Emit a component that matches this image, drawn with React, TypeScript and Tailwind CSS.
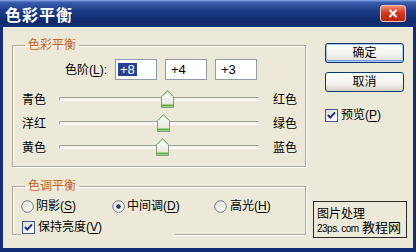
import React from 'react'

const sliders = [
  { left: '青色', right: '红色', value: 8 },
  { left: '洋红', right: '绿色', value: 4 },
  { left: '黄色', right: '蓝色', value: 3 },
]

const U = ({ c }: { c: string }) => <span className="underline underline-offset-[2px]">{c}</span>

const Thumb = () => (
  <svg width="13" height="18" viewBox="0 0 13 18">
    <defs>
      <linearGradient id="thumbFill" x1="0" y1="0" x2="0" y2="1">
        <stop offset="0" stopColor="#ffffff" />
        <stop offset="1" stopColor="#e4e4da" />
      </linearGradient>
    </defs>
    <path d="M6.5 0.5 L12.5 6.5 V17.5 H0.5 V6.5 Z" fill="url(#thumbFill)" stroke="#8a9a88" />
    <path d="M1 6.5 L6.5 1 L12 6.5" fill="none" stroke="#6cbf4e" strokeWidth="1" />
    <path d="M1 15.5 H12" stroke="#5cb23e" strokeWidth="2" />
  </svg>
)

const CheckBox = () => (
  <svg width="13" height="13" viewBox="0 0 13 13">
    <defs>
      <linearGradient id="cbFill" x1="0" y1="0" x2="1" y2="1">
        <stop offset="0" stopColor="#dcdcd5" />
        <stop offset="1" stopColor="#ffffff" />
      </linearGradient>
    </defs>
    <rect x="0.5" y="0.5" width="12" height="12" fill="url(#cbFill)" stroke="#3c5a8c" />
    <path d="M3 6 L5.3 8.6 L10 3.4" fill="none" stroke="#1f2f8a" strokeWidth="2" />
  </svg>
)

const Radio = ({ on }: { on?: boolean }) => (
  <svg width="13" height="13" viewBox="0 0 13 13">
    <defs>
      <linearGradient id="rdFill" x1="0" y1="0" x2="1" y2="1">
        <stop offset="0" stopColor="#dcdcd5" />
        <stop offset="1" stopColor="#ffffff" />
      </linearGradient>
    </defs>
    <circle cx="6.5" cy="6.5" r="5.8" fill="url(#rdFill)" stroke="#6b7a8c" />
    {on && <circle cx="6.5" cy="6.5" r="2.3" fill="#2a3a6e" />}
  </svg>
)

const inputCls =
  'w-[42px] h-[21px] border border-[#8c9bab] bg-white flex items-center pl-[5px] text-[13px] text-black'

export default function App() {
  return (
    <div className="w-[416px] h-[252px] flex flex-col bg-[#ece9d8] font-['Liberation_Sans','Noto_Sans_CJK_SC',sans-serif] text-[12px] leading-[14px] text-black">
      {/* title bar */}
      <div className="h-[27px] flex items-center justify-between pl-[5px] pr-[10px] bg-[linear-gradient(to_bottom,#8aa6e6_0%,#3a5cab_9%,#1c3c88_40%,#0f2a6a_82%,#17347c_100%)]">
        <span className="text-white font-bold text-[16px] leading-[18px] tracking-[1px] font-['Noto_Sans_CJK_SC',sans-serif]">色彩平衡</span>
        <div className="w-[26px] h-[17px] rounded-[3px] border border-[#f2c4b8] bg-[linear-gradient(to_bottom,#f08a70,#d23a1e_45%,#b8240e)] flex items-center justify-center">
          <svg width="10" height="9" viewBox="0 0 10 9">
            <path d="M1.5 1 L8.5 8 M8.5 1 L1.5 8" stroke="#fff" strokeWidth="2" />
          </svg>
        </div>
      </div>

      {/* body */}
      <div className="flex-1 flex border-l-[3px] border-r-[3px] border-b-[4px] border-[#122f76] pl-[9px] pb-[10px]">
        <div className="w-[294px] flex flex-col">
          <fieldset className="mt-[11px] border border-[#aca899] shadow-[inset_1px_1px_0_#fff,1px_1px_0_#fff] pb-[6px]">
            <legend className="ml-[12px] px-[3px] text-[#c8651b]">色彩平衡</legend>
            <div className="mt-[7px] flex items-center">
              <div className="ml-[48px] w-[46px] text-right">
                色阶(<U c="L" />):
              </div>
              <div className="ml-[8px] flex gap-[8px]">
                <div className={inputCls}>
                  <span className="-ml-[3px] pl-[2px] pr-[2px] bg-[#26448e] text-white leading-[13px]">+8</span>
                </div>
                <div className={inputCls}>+4</div>
                <div className={inputCls}>+3</div>
              </div>
            </div>
            <div className="mt-[8px] flex flex-col">
              {sliders.map((s) => (
                <div key={s.left} className="h-[24px] flex items-center pl-[9px]">
                  <span className="w-[24px]">{s.left}</span>
                  <div className="ml-[13px] w-[200px] h-[18px] mb-[2px] relative">
                    <div className="absolute left-0 right-0 top-[7px] h-[4px] border-t border-l border-[#a0a09a] border-b-white border-b bg-[#f4f3ee] rounded-[2px]" />
                    <div className="absolute top-0" style={{ left: 100 + s.value - 6 }}>
                      <Thumb />
                    </div>
                  </div>
                  <span className="ml-[14px]">{s.right}</span>
                </div>
              ))}
            </div>
          </fieldset>

          <fieldset className="mt-[12px] border border-[#aca899] shadow-[inset_1px_1px_0_#fff,1px_1px_0_#fff]">
            <legend className="ml-[12px] px-[3px] text-[#c8651b]">色调平衡</legend>
            <div className="mt-[6px] h-[14px] flex items-center pl-[8px]">
              <div className="w-[91px] flex items-center gap-[2px]">
                <Radio />
                <span>阴影(<U c="S" />)</span>
              </div>
              <div className="w-[102px] flex items-center gap-[2px]">
                <Radio on />
                <span>中间调(<U c="D" />)</span>
              </div>
              <div className="flex items-center gap-[3px]">
                <Radio />
                <span>高光(<U c="H" />)</span>
              </div>
            </div>
            <div className="mt-[5px] -mb-[2px] ml-[8px] w-[154px] h-[18px] bg-[#ece9d8] flex items-center gap-[3px] pl-[1px]">
              <CheckBox />
              <span>保持亮度(<U c="V" />)</span>
            </div>
          </fieldset>
        </div>

        {/* right column */}
        <div className="flex-1 flex flex-col">
          <button className="mt-[16px] ml-[19px] w-[79px] h-[20px] rounded-[3px] border border-[#003c74] bg-[linear-gradient(to_bottom,#ffffff,#f2f2ee_60%,#dcdcd2)] shadow-[inset_0_0_0_1px_#a8c4f0,inset_0_-2px_0_#7a9ae6] text-[12px]">
            确定
          </button>
          <button className="mt-[9px] ml-[19px] w-[79px] h-[20px] rounded-[3px] border border-[#003c74] bg-[linear-gradient(to_bottom,#ffffff,#f2f2ee_60%,#d6d0c5)] text-[12px]">
            取消
          </button>
          <div className="mt-[16px] ml-[19px] flex items-center gap-[3px]">
            <CheckBox />
            <span>预览(<U c="P" />)</span>
          </div>
          <div className="mt-auto ml-[7px] w-[94px] h-[37px] border border-[#2a2a2a] flex items-end pl-[3px] pb-[2px]">
            <div className="w-[44px] flex flex-col">
              <span className="whitespace-nowrap text-[12px] leading-[14px] font-['Noto_Sans_CJK_SC',sans-serif]">图片处理</span>
              <span className="mt-[3px] whitespace-nowrap text-[10px] leading-[12px] tracking-[-0.5px]">23ps. com</span>
            </div>
            <span className="ml-[1px] text-[13px] leading-[16px] font-['Noto_Sans_CJK_SC',sans-serif]">教程网</span>
          </div>
        </div>
      </div>
    </div>
  )
}
